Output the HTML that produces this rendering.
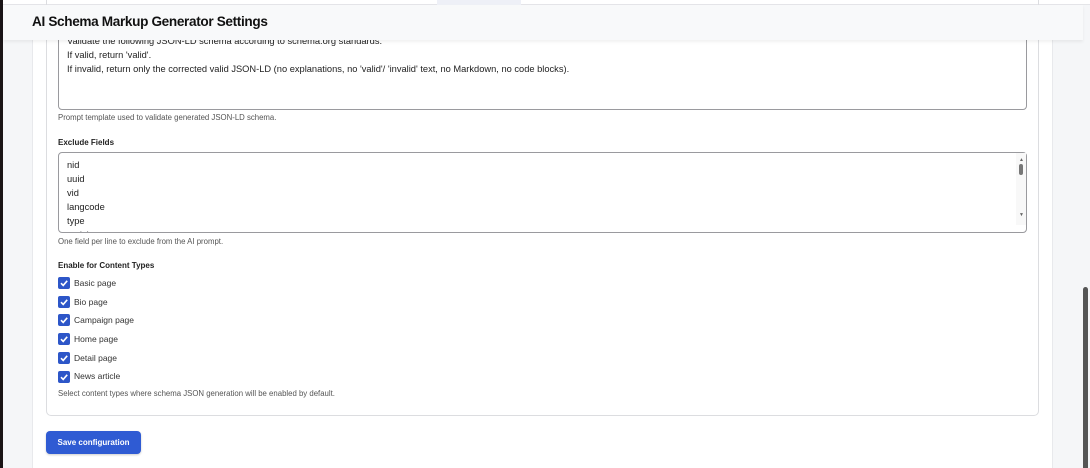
<!DOCTYPE html>
<html><head><meta charset="utf-8"><style>
*{box-sizing:border-box;margin:0;padding:0}
body{width:1090px;height:468px;overflow:hidden;background:#f5f6f8;font-family:"Liberation Sans",sans-serif;color:#222;position:relative}
.dark{position:absolute;left:0;top:0;width:3px;height:468px;background:#1a1416}
.main{position:absolute;left:32px;top:0;width:1021px;height:468px;background:#fff;border-left:1px solid #e8e9ec;border-right:1px solid #e8e9ec}
.top{position:absolute;left:3px;top:0;width:1087px;height:5px;background:#fff;border-bottom:1px solid #e4e5e8}
.tab{position:absolute;left:437px;top:0;width:84px;height:5px;background:#eef0f7}
.hdr{position:absolute;left:3px;top:5px;width:1080px;height:35px;background:#f8f9fa;box-shadow:0 2px 3px rgba(0,0,0,.06);z-index:5}
.hdr h1{position:absolute;left:29px;top:9px;font-size:13.6px;font-weight:bold;color:#111;letter-spacing:-.35px}
.fs{position:absolute;left:46px;top:-10px;width:993px;height:426px;border:1px solid #dcdde0;border-radius:5px}
.ta{position:absolute;left:58px;width:969px;border:1px solid #9a9a9e;border-radius:4px;background:#fff;font-size:9.3px;line-height:14px;padding-left:8px;color:#222}
.desc{position:absolute;left:58px;font-size:7.8px;color:#555}
.lbl{position:absolute;left:58px;font-size:8px;font-weight:bold;color:#222}
.cb{position:absolute;left:58px;width:12px;height:12px;background:#2d56c8;border-radius:2px}
.cb svg{position:absolute;left:0;top:0}
.cbl{position:absolute;left:74px;font-size:8.5px;color:#333}
.btn{position:absolute;left:46px;top:431px;width:95px;height:23px;background:#2f5bd3;border-radius:4px;color:#fff;font-size:8px;font-weight:bold;text-align:center;line-height:23px;box-shadow:0 1px 2px rgba(0,0,0,.2)}
.sb{position:absolute;left:1083px;top:287px;width:5px;height:181px;background:#555;border-radius:3px 3px 0 0}
</style></head><body>
<div class="dark"></div>
<div class="main"></div>
<div class="top"></div><div class="tab"></div>
<div class="hdr"><h1>AI Schema Markup Generator Settings</h1></div>
<div class="fs"></div>
<div class="ta" style="top:20px;height:90px;padding-top:13px">Validate the following JSON-LD schema according to schema.org standards.<br>If valid, return 'valid'.<br>If invalid, return only the corrected valid JSON-LD (no explanations, no 'valid'/ 'invalid' text, no Markdown, no code blocks).</div>
<div class="desc" style="top:113px">Prompt template used to validate generated JSON-LD schema.</div>
<div class="lbl" style="top:138px">Exclude Fields</div>
<div class="ta" style="top:152px;height:81px;padding-top:5px;overflow:hidden">nid<br>uuid<br>vid<br>langcode<br>type<br>revision</div>
<div style="position:absolute;left:1016px;top:153px;width:10px;height:72px;background:#f8f8f8"></div>
<div style="position:absolute;left:1019px;top:164px;width:4px;height:11px;background:#777;border-radius:2px"></div>
<div style="position:absolute;left:1019px;top:157px;font-size:5px;color:#666">▲</div>
<div style="position:absolute;left:1019px;top:212px;font-size:5px;color:#666">▼</div>
<div class="desc" style="top:237px">One field per line to exclude from the AI prompt.</div>
<div class="lbl" style="top:261px">Enable for Content Types</div>
<div class="cb" style="top:277px"><svg width="12" height="12"><path d="M3 6.2l2.2 2.2L9.2 3.8" stroke="#fff" stroke-width="1.6" fill="none"/></svg></div><div class="cbl" style="top:278px">Basic page</div>
<div class="cb" style="top:296px"><svg width="12" height="12"><path d="M3 6.2l2.2 2.2L9.2 3.8" stroke="#fff" stroke-width="1.6" fill="none"/></svg></div><div class="cbl" style="top:297px">Bio page</div>
<div class="cb" style="top:314px"><svg width="12" height="12"><path d="M3 6.2l2.2 2.2L9.2 3.8" stroke="#fff" stroke-width="1.6" fill="none"/></svg></div><div class="cbl" style="top:315px">Campaign page</div>
<div class="cb" style="top:333px"><svg width="12" height="12"><path d="M3 6.2l2.2 2.2L9.2 3.8" stroke="#fff" stroke-width="1.6" fill="none"/></svg></div><div class="cbl" style="top:334px">Home page</div>
<div class="cb" style="top:352px"><svg width="12" height="12"><path d="M3 6.2l2.2 2.2L9.2 3.8" stroke="#fff" stroke-width="1.6" fill="none"/></svg></div><div class="cbl" style="top:353px">Detail page</div>
<div class="cb" style="top:371px"><svg width="12" height="12"><path d="M3 6.2l2.2 2.2L9.2 3.8" stroke="#fff" stroke-width="1.6" fill="none"/></svg></div><div class="cbl" style="top:371px">News article</div>
<div class="desc" style="top:389px">Select content types where schema JSON generation will be enabled by default.</div>
<div class="btn">Save configuration</div>
<div class="sb"></div>
</body></html>
